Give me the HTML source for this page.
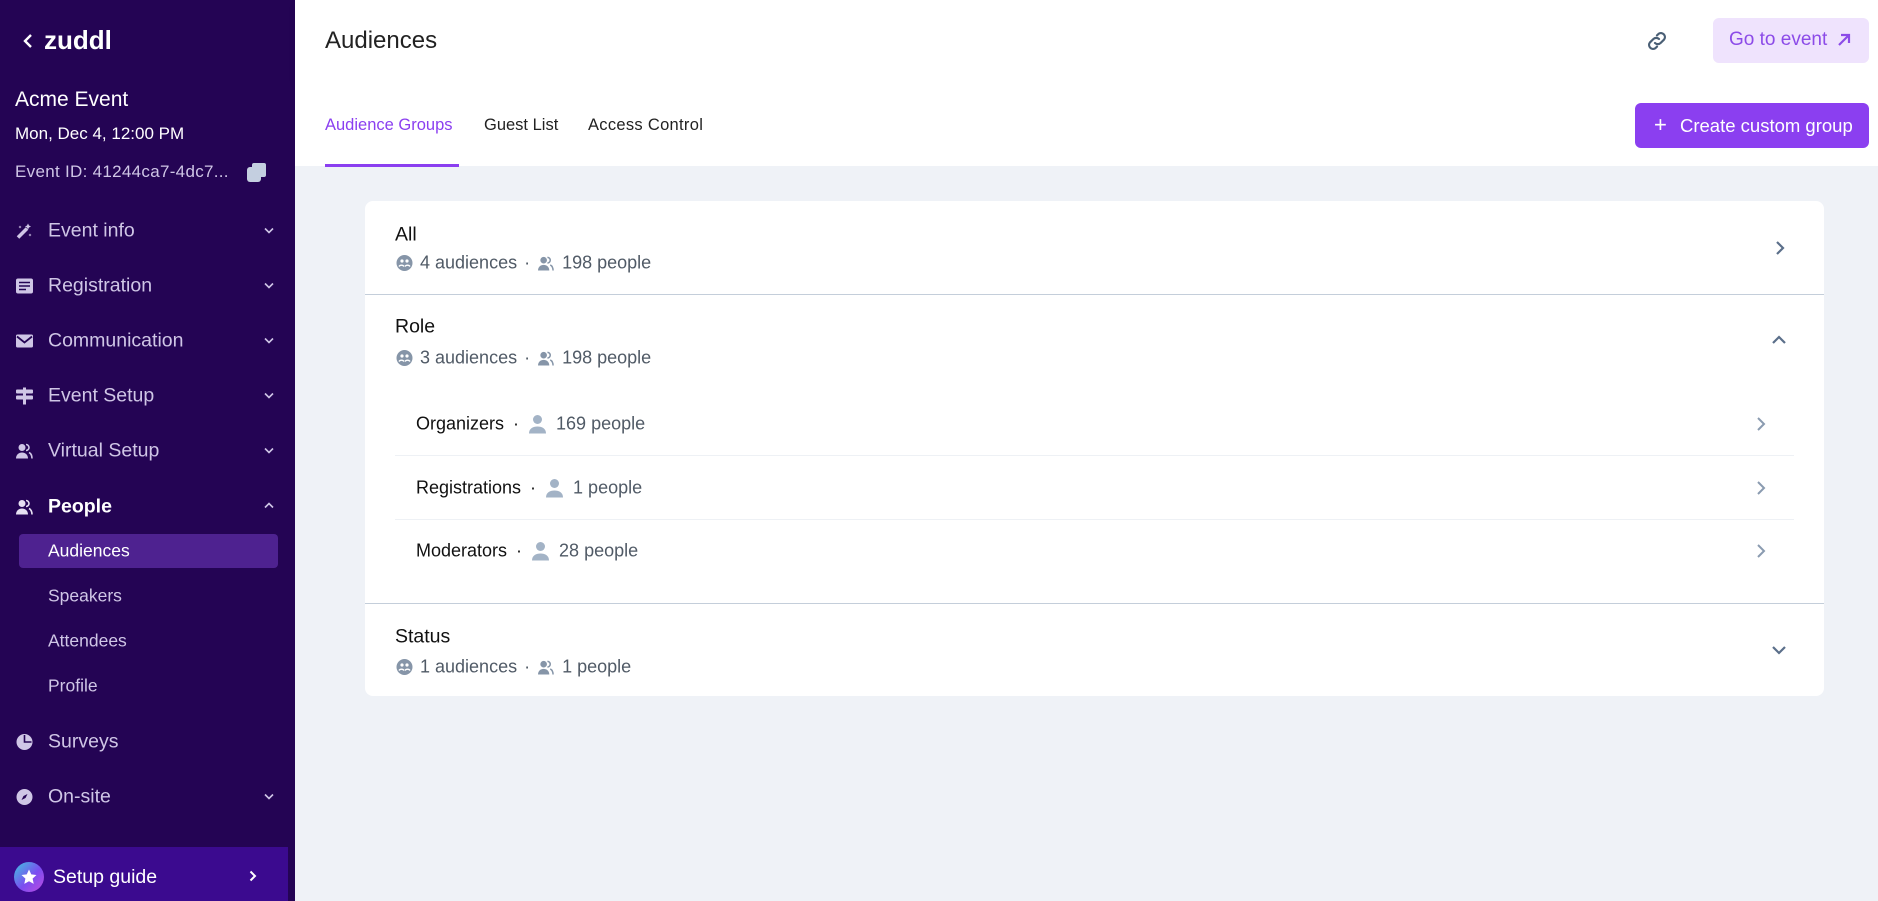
<!DOCTYPE html>
<html><head><meta charset="utf-8"><style>
*{box-sizing:border-box;margin:0;padding:0}
body{width:1878px;height:901px;overflow:hidden;background:#eff2f7;font-family:"Liberation Sans",sans-serif;position:relative}
.a{position:absolute;white-space:nowrap}
#sb{position:absolute;left:0;top:0;width:295px;height:901px;background:#240454}
.nav{position:absolute;left:48px;font-size:19.5px;color:#cfc6e6;transform:translateY(-50%)}
.ic{position:absolute;left:16px;width:17px;height:17px;transform:translateY(-50%)}
.chev{position:absolute;left:264px;transform:translateY(-50%)}
.sub{position:absolute;left:48px;font-size:17.5px;color:#cfc6e6;transform:translateY(-50%)}
.c{transform:translateY(-50%)}
.title{font-size:19.5px;color:#111}
.meta{font-size:18px;color:#505a66;display:flex;align-items:center;gap:7px}
.subt{font-size:18px;color:#111;display:flex;align-items:center;gap:9px}
.subt span.p{color:#505a66}
</style></head><body>
<div id="sb">
 <svg class="a" style="left:22px;top:33px" width="12" height="16" viewBox="0 0 12 16"><path d="M9 2L3 8l6 6" stroke="#fff" stroke-width="2.4" fill="none"/></svg>
 <div class="a" style="left:44px;top:25px;font-size:26px;font-weight:bold;color:#fff">zuddl</div>
 <div class="a" style="left:15px;top:88px;font-size:21px;color:#fff">Acme Event</div>
 <div class="a" style="left:15px;top:124px;font-size:17px;color:#fff">Mon, Dec 4, 12:00 PM</div>
 <div class="a" style="left:15px;top:162px;font-size:17px;color:#cfc6e6;letter-spacing:0.3px">Event ID: 41244ca7-4dc7...</div>
 <svg class="a" style="left:246px;top:162px" width="22" height="21" viewBox="0 0 22 21"><rect x="1" y="5" width="14" height="15" rx="3" fill="#c4cfe0"/><path d="M6 5V3a2 2 0 0 1 2-2h10a2 2 0 0 1 2 2v10a2 2 0 0 1-2 2h-3" fill="#c4cfe0"/></svg>

 <svg class="ic" style="top:231px" viewBox="0 0 17 17"><path d="M2 15L11 6" stroke="#cfc6e6" stroke-width="3.5"/><path d="M12 1l1 2 2 1-2 1-1 2-1-2-2-1 2-1zM4 3l.5 1 1 .5-1 .5L4 6l-.5-1-1-.5 1-.5zM14 11l.5 1 1 .5-1 .5-.5 1-.5-1-1-.5 1-.5z" fill="#cfc6e6"/></svg>
 <div class="nav" style="top:231px">Event info</div>
 <svg class="ic" style="top:286px" viewBox="0 0 17 17"><rect x="0" y="1" width="17" height="15" rx="2" fill="#cfc6e6"/><path d="M3 5h11M3 8.5h11M3 12h7" stroke="#240454" stroke-width="1.6"/></svg>
 <div class="nav" style="top:286px">Registration</div>
 <svg class="ic" style="top:341px" viewBox="0 0 17 17"><rect x="0" y="2" width="17" height="13" rx="1.5" fill="#cfc6e6"/><path d="M1 4l7.5 6L16 4" stroke="#240454" stroke-width="1.8" fill="none"/></svg>
 <div class="nav" style="top:341px">Communication</div>
 <svg class="ic" style="top:396px" viewBox="0 0 17 17"><rect x="0" y="2" width="17" height="4" rx="1" fill="#cfc6e6"/><rect x="0" y="8" width="17" height="4" rx="1" fill="#cfc6e6"/><rect x="7" y="0" width="3" height="17" fill="#cfc6e6"/></svg>
 <div class="nav" style="top:396px">Event Setup</div>
 <svg class="ic" style="top:451px" viewBox="0 0 17 17"><circle cx="6" cy="5" r="3.5" fill="#cfc6e6"/><path d="M0 16c0-4 3-6 6-6s6 2 6 6z" fill="#cfc6e6"/><path d="M10 2a3 3 0 0 1 0 6M13 10c2 1 3 3 3 6" stroke="#cfc6e6" stroke-width="1.6" fill="none"/></svg>
 <div class="nav" style="top:451px">Virtual Setup</div>
 <svg class="ic" style="top:507px" viewBox="0 0 17 17"><circle cx="6" cy="5" r="3.5" fill="#e6e0f2"/><path d="M0 16c0-4 3-6 6-6s6 2 6 6z" fill="#e6e0f2"/><path d="M10 2a3 3 0 0 1 0 6M13 10c2 1 3 3 3 6" stroke="#e6e0f2" stroke-width="1.6" fill="none"/></svg>
 <div class="nav" style="top:507px;color:#fff;font-weight:bold">People</div>
 <div class="a" style="left:19px;top:534px;width:259px;height:34px;background:#4e2290;border-radius:4px"></div>
 <div class="sub" style="top:551px;color:#fff">Audiences</div>
 <div class="sub" style="top:596px">Speakers</div>
 <div class="sub" style="top:641px">Attendees</div>
 <div class="sub" style="top:686px">Profile</div>
 <svg class="ic" style="top:742px" viewBox="0 0 17 17"><circle cx="8.5" cy="8.5" r="8" fill="#cfc6e6"/><path d="M8.5 1.5v7h7" stroke="#240454" stroke-width="1.6" fill="none"/></svg>
 <div class="nav" style="top:742px">Surveys</div>
 <svg class="ic" style="top:797px" viewBox="0 0 17 17"><circle cx="8.5" cy="8.5" r="8" fill="#cfc6e6"/><path d="M11.5 5.5l-2 4-4 2 2-4z" fill="#240454"/></svg>
 <div class="nav" style="top:797px">On-site</div>
 <svg class="chev" style="top:231px" width="10" height="7" viewBox="0 0 10 7"><path d="M1 1l4 4 4-4" stroke="#cfc6e6" stroke-width="1.6" fill="none"/></svg>
 <svg class="chev" style="top:286px" width="10" height="7" viewBox="0 0 10 7"><path d="M1 1l4 4 4-4" stroke="#cfc6e6" stroke-width="1.6" fill="none"/></svg>
 <svg class="chev" style="top:341px" width="10" height="7" viewBox="0 0 10 7"><path d="M1 1l4 4 4-4" stroke="#cfc6e6" stroke-width="1.6" fill="none"/></svg>
 <svg class="chev" style="top:396px" width="10" height="7" viewBox="0 0 10 7"><path d="M1 1l4 4 4-4" stroke="#cfc6e6" stroke-width="1.6" fill="none"/></svg>
 <svg class="chev" style="top:451px" width="10" height="7" viewBox="0 0 10 7"><path d="M1 1l4 4 4-4" stroke="#cfc6e6" stroke-width="1.6" fill="none"/></svg>
 <svg class="chev" style="top:505px" width="10" height="7" viewBox="0 0 10 7"><path d="M1 6l4-4 4 4" stroke="#cfc6e6" stroke-width="1.6" fill="none"/></svg>
 <svg class="chev" style="top:797px" width="10" height="7" viewBox="0 0 10 7"><path d="M1 1l4 4 4-4" stroke="#cfc6e6" stroke-width="1.6" fill="none"/></svg>
 <div class="a" style="left:0;top:847px;width:288px;height:54px;background:#3b0a8f"></div>
 <div class="a" style="left:14px;top:862px;width:30px;height:30px;border-radius:50%;background:linear-gradient(135deg,#3ec6e0,#7b4cf0 55%,#c04ce0)"></div>
 <svg class="a" style="left:20px;top:868px" width="18" height="18" viewBox="0 0 24 24"><path d="M12 2l3 6.5 7 .8-5.2 4.8 1.5 7L12 17.6 5.7 21.1l1.5-7L2 9.3l7-.8z" fill="#fff"/></svg>
 <div class="a" style="left:53px;top:866px;font-size:19.5px;color:#fff">Setup guide</div>
 <svg class="a" style="left:249px;top:870px" width="8" height="12" viewBox="0 0 8 12"><path d="M1.5 1.5L6 6l-4.5 4.5" stroke="#fff" stroke-width="2" fill="none"/></svg>
</div>

<div class="a" style="left:295px;top:0;width:1583px;height:84px;background:#fff;box-shadow:0 2px 8px rgba(0,0,0,0.05)"></div>
<div class="a" style="left:295px;top:84px;width:1583px;height:82px;background:#fff"></div>
<div class="a" style="left:325px;top:27px;font-size:24px;color:#222">Audiences</div>
<svg class="a" style="left:1645px;top:29px" width="24" height="24" viewBox="0 0 24 24"><path d="M10 14a4 4 0 0 0 5.6 0l3.5-3.5a4 4 0 0 0-5.6-5.6L12 6.4M14 10a4 4 0 0 0-5.6 0L4.9 13.5a4 4 0 0 0 5.6 5.6L12 17.6" stroke="#4a5f75" stroke-width="2.2" fill="none" stroke-linecap="round"/></svg>
<div class="a" style="left:1713px;top:18px;width:156px;height:45px;background:#efe3fd;border-radius:6px"></div>
<div class="a" style="left:1729px;top:29px;font-size:19px;color:#8c4be8">Go to event</div>
<svg class="a" style="left:1836px;top:32px" width="16" height="16" viewBox="0 0 16 16"><path d="M3 13L13 3M5 3h8v8" stroke="#8c4be8" stroke-width="2.2" fill="none"/></svg>
<div class="a" style="left:325px;top:116px;font-size:16.5px;color:#8b3ff0">Audience Groups</div>
<div class="a" style="left:484px;top:116px;font-size:16.5px;color:#222">Guest List</div>
<div class="a" style="left:588px;top:116px;font-size:16.5px;color:#222;letter-spacing:0.3px">Access Control</div>
<div class="a" style="left:325px;top:164px;width:134px;height:3px;background:#8b3ff0"></div>
<div class="a" style="left:1635px;top:103px;width:234px;height:45px;background:#8b3ff0;border-radius:6px"></div>
<div class="a" style="left:1654px;top:112px;font-size:22px;color:#fff">+</div>
<div class="a" style="left:1680px;top:115px;font-size:18.5px;color:#fff">Create custom group</div>

<div class="a" style="left:365px;top:201px;width:1459px;height:495px;background:#fff;border-radius:8px"></div>
<div class="a" style="left:365px;top:294px;width:1459px;height:1px;background:#c4ceda"></div>
<div class="a" style="left:365px;top:603px;width:1459px;height:1px;background:#c4ceda"></div>
<div class="a" style="left:395px;top:455px;width:1399px;height:1px;background:#eef1f5"></div>
<div class="a" style="left:395px;top:519px;width:1399px;height:1px;background:#eef1f5"></div>

<div class="a c title" style="left:395px;top:235px">All</div>
<div class="a c meta" style="left:396px;top:263px"><svg width="17" height="17" viewBox="0 0 17 17"><circle cx="8.5" cy="8.5" r="8" fill="#8695a8"/><circle cx="6" cy="6.5" r="1.6" fill="#fff"/><circle cx="11" cy="6.5" r="1.6" fill="#fff"/><path d="M3 12a3 3 0 0 1 5 0M9 12a3 3 0 0 1 5 0" stroke="#fff" stroke-width="1.4" fill="none"/></svg><span>4 audiences</span><span>·</span><svg width="18" height="16" viewBox="0 0 17 17"><circle cx="6" cy="5" r="3.5" fill="#8695a8"/><path d="M0 16c0-4 3-6 6-6s6 2 6 6z" fill="#8695a8"/><path d="M10 2a3 3 0 0 1 0 6M13 10c2 1 3 3 3 6" stroke="#8695a8" stroke-width="1.6" fill="none"/></svg><span>198 people</span></div>
<svg class="a" style="left:1775px;top:240px" width="10" height="16" viewBox="0 0 10 16"><path d="M2 2l6 6-6 6" stroke="#5b6f8a" stroke-width="2.2" fill="none"/></svg>

<div class="a c title" style="left:395px;top:327px">Role</div>
<div class="a c meta" style="left:396px;top:358px"><svg width="17" height="17" viewBox="0 0 17 17"><circle cx="8.5" cy="8.5" r="8" fill="#8695a8"/><circle cx="6" cy="6.5" r="1.6" fill="#fff"/><circle cx="11" cy="6.5" r="1.6" fill="#fff"/><path d="M3 12a3 3 0 0 1 5 0M9 12a3 3 0 0 1 5 0" stroke="#fff" stroke-width="1.4" fill="none"/></svg><span>3 audiences</span><span>·</span><svg width="18" height="16" viewBox="0 0 17 17"><circle cx="6" cy="5" r="3.5" fill="#8695a8"/><path d="M0 16c0-4 3-6 6-6s6 2 6 6z" fill="#8695a8"/><path d="M10 2a3 3 0 0 1 0 6M13 10c2 1 3 3 3 6" stroke="#8695a8" stroke-width="1.6" fill="none"/></svg><span>198 people</span></div>
<svg class="a" style="left:1771px;top:335px" width="16" height="10" viewBox="0 0 16 10"><path d="M2 8l6-6 6 6" stroke="#5b6f8a" stroke-width="2.2" fill="none"/></svg>

<div class="a c subt" style="left:416px;top:424px">Organizers <span>·</span><svg width="19" height="19" viewBox="0 0 19 19"><circle cx="9.5" cy="5" r="4.5" fill="#a3b3c6"/><path d="M1 19c0-5 4-7 8.5-7s8.5 2 8.5 7z" fill="#a3b3c6"/></svg><span class="p">169 people</span></div>
<div class="a c subt" style="left:416px;top:488px">Registrations <span>·</span><svg width="19" height="19" viewBox="0 0 19 19"><circle cx="9.5" cy="5" r="4.5" fill="#a3b3c6"/><path d="M1 19c0-5 4-7 8.5-7s8.5 2 8.5 7z" fill="#a3b3c6"/></svg><span class="p">1 people</span></div>
<div class="a c subt" style="left:416px;top:551px">Moderators <span>·</span><svg width="19" height="19" viewBox="0 0 19 19"><circle cx="9.5" cy="5" r="4.5" fill="#a3b3c6"/><path d="M1 19c0-5 4-7 8.5-7s8.5 2 8.5 7z" fill="#a3b3c6"/></svg><span class="p">28 people</span></div>
<svg class="a" style="left:1756px;top:416px" width="10" height="16" viewBox="0 0 10 16"><path d="M2 2l6 6-6 6" stroke="#8a9bb0" stroke-width="2" fill="none"/></svg>
<svg class="a" style="left:1756px;top:480px" width="10" height="16" viewBox="0 0 10 16"><path d="M2 2l6 6-6 6" stroke="#8a9bb0" stroke-width="2" fill="none"/></svg>
<svg class="a" style="left:1756px;top:543px" width="10" height="16" viewBox="0 0 10 16"><path d="M2 2l6 6-6 6" stroke="#8a9bb0" stroke-width="2" fill="none"/></svg>

<div class="a c title" style="left:395px;top:637px">Status</div>
<div class="a c meta" style="left:396px;top:667px"><svg width="17" height="17" viewBox="0 0 17 17"><circle cx="8.5" cy="8.5" r="8" fill="#8695a8"/><circle cx="6" cy="6.5" r="1.6" fill="#fff"/><circle cx="11" cy="6.5" r="1.6" fill="#fff"/><path d="M3 12a3 3 0 0 1 5 0M9 12a3 3 0 0 1 5 0" stroke="#fff" stroke-width="1.4" fill="none"/></svg><span>1 audiences</span><span>·</span><svg width="18" height="16" viewBox="0 0 17 17"><circle cx="6" cy="5" r="3.5" fill="#8695a8"/><path d="M0 16c0-4 3-6 6-6s6 2 6 6z" fill="#8695a8"/><path d="M10 2a3 3 0 0 1 0 6M13 10c2 1 3 3 3 6" stroke="#8695a8" stroke-width="1.6" fill="none"/></svg><span>1 people</span></div>
<svg class="a" style="left:1771px;top:645px" width="16" height="10" viewBox="0 0 16 10"><path d="M2 2l6 6 6-6" stroke="#5b6f8a" stroke-width="2.2" fill="none"/></svg>
</body></html>
